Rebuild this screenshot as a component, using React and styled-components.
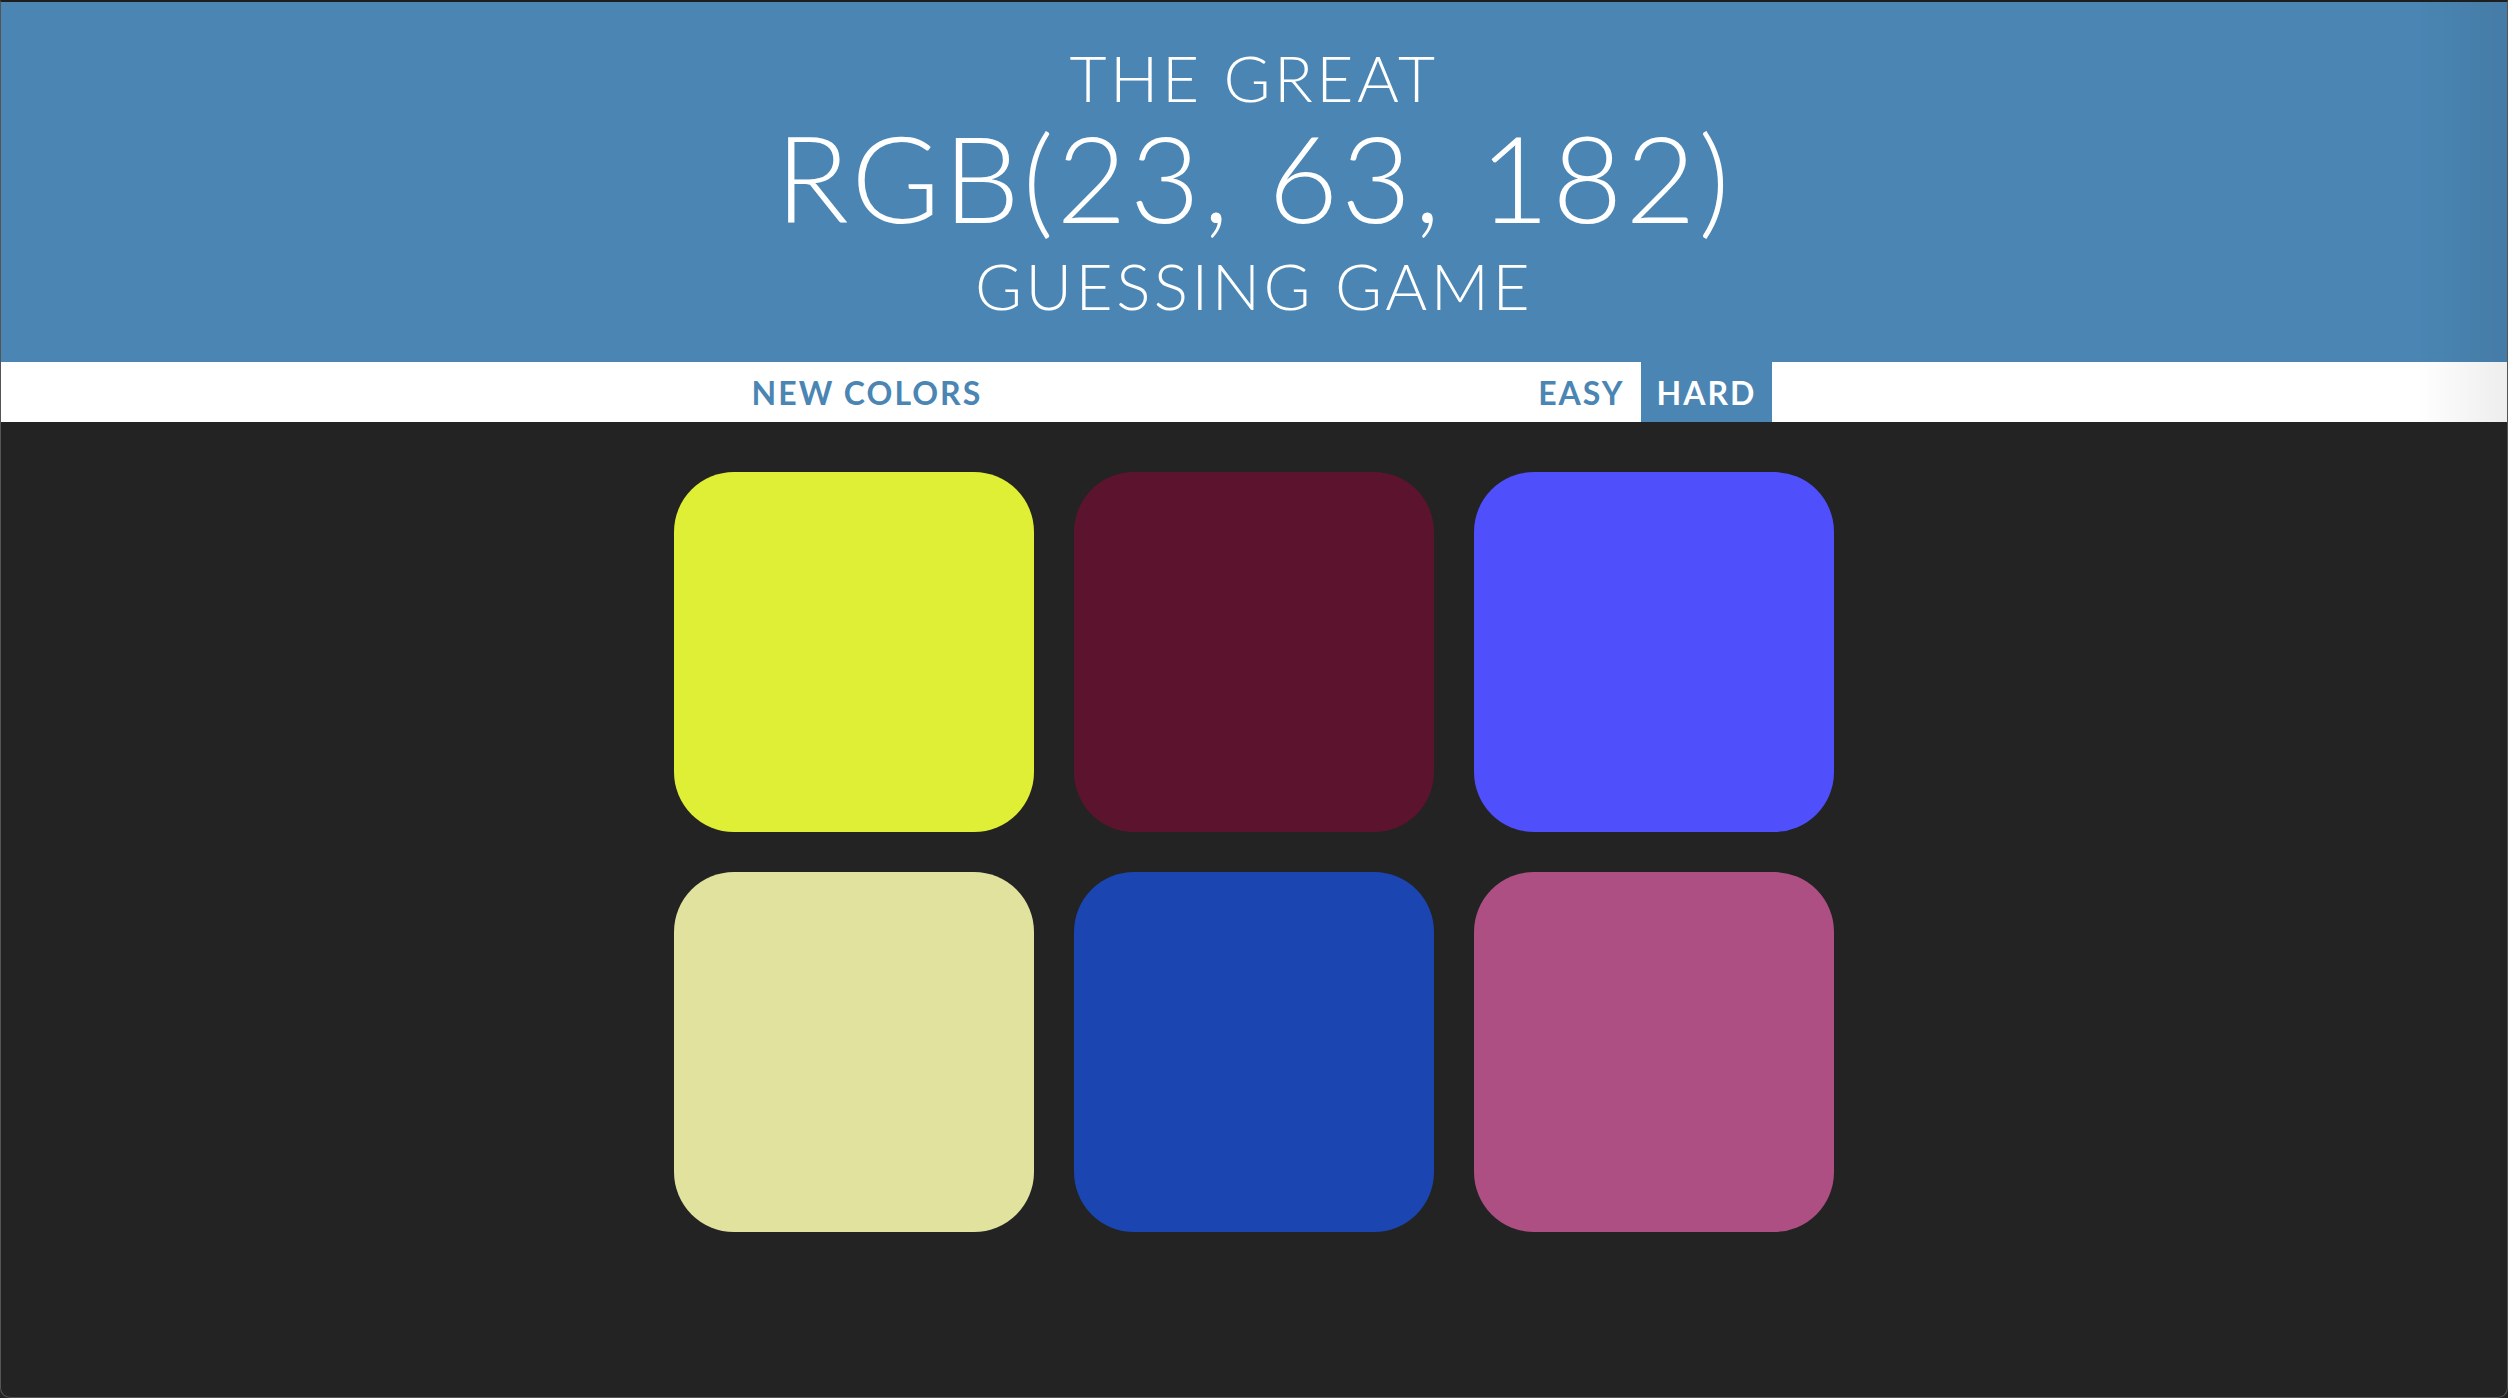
import React from "react";
import styled, { createGlobalStyle } from "styled-components";

const GlobalStyle = createGlobalStyle`
  html, body {
    margin: 0;
    padding: 0;
    background: #232323;
  }
  body {
    font-family: Lato, "Liberation Sans", sans-serif;
  }
`;

const Page = styled.div`
  position: relative;
  min-height: 1398px;
  box-sizing: border-box;
  background: #232323;
  border-top: 2px solid #1e1e1e;
  border-left: 1px solid #555;
  border-right: 1px solid #555;
  border-bottom: 1px solid #555;
  border-radius: 0 0 10px 10px;
  overflow: hidden;
`;

// faint shading at the right window edge
const EdgeShade = styled.div`
  position: absolute;
  top: 0;
  right: 0;
  width: 90px;
  height: 420px;
  background: linear-gradient(to right, rgba(0, 0, 0, 0), rgba(0, 0, 0, 0.07));
  pointer-events: none;
`;

const Header = styled.h1`
  margin: 0;
  height: 360px;
  box-sizing: border-box;
  padding-top: 39px;
  background: #4a85b3;
  color: #fff;
  text-align: center;
  text-transform: uppercase;
  font-weight: 300;
`;

const Line = styled.span`
  display: block;
  font-size: ${p => p.size}px;
  line-height: ${p => p.lh}px;
  letter-spacing: ${p => p.spacing || 0}px;
  font-weight: 300;
`;

const Stripe = styled.nav`
  height: 60px;
  background: #fff;
  display: flex;
  justify-content: center;
  align-items: stretch;
`;

const Button = styled.button`
  border: none;
  margin: 0;
  padding: 0 16px;
  height: 60px;
  background: ${p => (p.selected ? "#4a85b3" : "#fff")};
  color: ${p => (p.selected ? "#fff" : "#4a85b3")};
  font-family: Lato, "Liberation Sans", sans-serif;
  font-weight: 700;
  font-size: 32px;
  letter-spacing: 2px;
  text-transform: uppercase;
  cursor: pointer;
`;

const Message = styled.span`
  display: inline-block;
  width: 524px;
`;

const Container = styled.div`
  margin: 50px auto 0;
  width: 1160px;
  display: grid;
  grid-template-columns: repeat(3, 360px);
  gap: 40px;
`;

const Square = styled.div`
  width: 360px;
  height: 360px;
  border-radius: 60px;
  background: ${p => p.color};
`;

const colors = [
  "#dfef36",
  "#5c142e",
  "#4f4ffb",
  "#e0e29e",
  "#1b45b1",
  "#ad4f82"
];

export default function App() {
  return (
    <Page>
      <GlobalStyle />
      <Header>
        <Line size={64} lh={74} spacing={3.5}>The Great</Line>
        <Line size={121} lh={124} spacing={2.9}>RGB(23, 63, 182)</Line>
        <Line size={64} lh={94} spacing={3.5}>Guessing Game</Line>
      </Header>
      <Stripe>
        <Button>New Colors</Button>
        <Message />
        <Button>Easy</Button>
        <Button selected>Hard</Button>
      </Stripe>
      <Container>
        {colors.map((c, i) => (
          <Square key={i} color={c} />
        ))}
      </Container>
      <EdgeShade />
    </Page>
  );
}
